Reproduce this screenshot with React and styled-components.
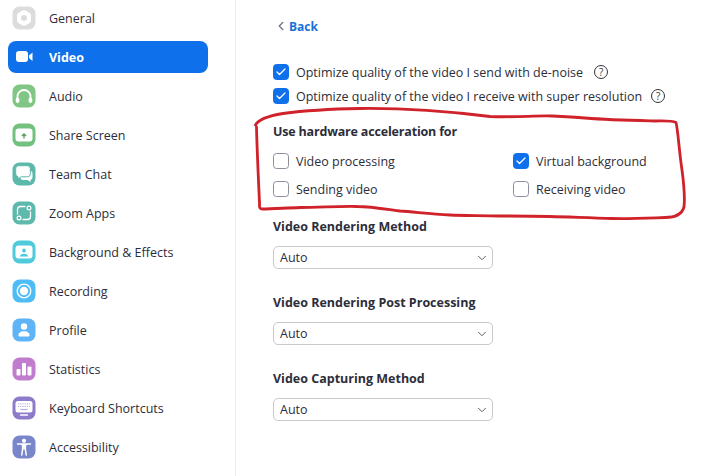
import React from "react";
import styled, { createGlobalStyle } from "styled-components";
import { ChevronLeft, ChevronDown, Check } from "lucide-react";

const Global = createGlobalStyle`
  html, body { margin: 0; padding: 0; background: #fff; }
  body { font-family: "Open Sans", "Noto Sans", sans-serif; color: #232333; overflow: hidden; }
`;

const Page = styled.div`
  position: relative;
  display: flex;
  width: 725px;
  height: 476px;
  overflow: hidden;
`;

const Sidebar = styled.nav`
  box-sizing: border-box;
  width: 236px;
  height: 476px;
  padding: 2px 27px 0 8px;
  border-right: 1px solid #ededf0;
  display: flex;
  flex-direction: column;
`;

const NavItem = styled.div`
  box-sizing: border-box;
  height: 32px;
  margin-bottom: 7px;
  padding-left: 4px;
  display: flex;
  align-items: center;
  border-radius: 8px;
  font-size: 12.5px;
  font-weight: ${(p) => (p.$active ? 700 : 400)};
  color: ${(p) => (p.$active ? "#fff" : "#2d2d3a")};
  background: ${(p) => (p.$active ? "#0e71eb" : "transparent")};
`;

const NavIcon = styled.span`
  width: 24px;
  height: 24px;
  flex: none;
  margin-right: 13px;
  display: flex;
  svg { display: block; }
`;

const Tile = ({ color, children }) => (
  <svg width="24" height="24" viewBox="0 0 24 24">
    <rect x="0.5" y="0.5" width="23" height="23" rx="7" fill={color} />
    {children}
  </svg>
);

const icons = {
  General: (
    <Tile color="#dcdcdc">
      <path
        d="M10.6 4.6a2.600 2.600 0 0 1 2.800 0l4.200 2.500a2.600 2.600 0 0 1 1.400 2.300v5.200a2.600 2.600 0 0 1-1.400 2.300l-4.200 2.500a2.600 2.600 0 0 1-2.800 0l-4.200-2.500A2.600 2.600 0 0 1 5 14.600V9.400a2.600 2.600 0 0 1 1.400-2.300z"
        fill="#fff"
      />
      <circle cx="12" cy="12" r="3" fill="#dcdcdc" />
    </Tile>
  ),
  Video: (
    <svg width="24" height="24" viewBox="0 0 24 24">
      <rect x="4" y="6" width="12" height="11" rx="3" fill="#fff" />
      <path d="M17 10.500 20.500 7.500V16L17 13z" fill="#fff" />
    </svg>
  ),
  Audio: (
    <Tile color="#80c684">
      <path d="M5.500 15v-2.500a6.500 6.500 0 0 1 13 0V15" fill="none" stroke="#fff" strokeWidth="1.800" />
      <rect x="3.800" y="13.500" width="3.500" height="5.500" rx="1.700" fill="#fff" />
      <rect x="16.700" y="13.500" width="3.500" height="5.500" rx="1.700" fill="#fff" />
    </Tile>
  ),
  "Share Screen": (
    <Tile color="#72c17e">
      <rect x="3.500" y="5.500" width="17" height="13" rx="3" fill="#fff" />
      <path d="M12 15.500v-4M9.900 13 12 10.900l2.100 2.100" fill="none" stroke="#4f9f5c" strokeWidth="1.300" />
    </Tile>
  ),
  "Team Chat": (
    <Tile color="#5bb8ab">
      <path d="M11 9h7a2.500 2.500 0 0 1 2.500 2.500v4a2.500 2.500 0 0 1-2 2.400V20l-3-2H11a2.500 2.500 0 0 1-2.500-2.500v-4A2.500 2.500 0 0 1 11 9z" fill="#fff" />
      <path d="M6.500 3.700h9A2.800 2.800 0 0 1 18.300 6.500v5.500a2.800 2.800 0 0 1-2.800 2.800H9.300L6 17v-2.300a2.800 2.800 0 0 1-2.300-2.700V6.500A2.800 2.800 0 0 1 6.500 3.700z" fill="#fff" stroke="#5bb8ab" strokeWidth="1" />
    </Tile>
  ),
  "Zoom Apps": (
    <Tile color="#5cb9ab">
      <path d="M13 5.500H8.500a3 3 0 0 0-3 3V13M11 18.500h4.500a3 3 0 0 0 3-3V11" fill="none" stroke="#fff" strokeWidth="1.300" strokeLinecap="round" />
      <circle cx="17" cy="7" r="1.900" fill="none" stroke="#fff" strokeWidth="1.200" />
      <circle cx="7" cy="17" r="1.900" fill="none" stroke="#fff" strokeWidth="1.200" />
    </Tile>
  ),
  "Background & Effects": (
    <Tile color="#4fcbdc">
      <rect x="3.500" y="5.500" width="17" height="13" rx="3" fill="#fff" />
      <circle cx="12" cy="10.500" r="2" fill="#4fcbdc" />
      <path d="M8 16.500c0-2 2-2.800 4-2.800s4 .8 4 2.800z" fill="#4fcbdc" />
    </Tile>
  ),
  Recording: (
    <Tile color="#4fbdf5">
      <circle cx="12" cy="12" r="6.800" fill="none" stroke="#fff" strokeWidth="1.300" />
      <circle cx="12" cy="12" r="4.200" fill="#fff" />
    </Tile>
  ),
  Profile: (
    <Tile color="#5eb4f7">
      <circle cx="12" cy="8.500" r="3.200" fill="#fff" />
      <path d="M6.500 17.300c0-3 2.500-4 5.500-4s5.500 1 5.500 4c0 .8-.5 1.200-1.200 1.200H7.700c-.7 0-1.200-.4-1.200-1.200z" fill="#fff" />
    </Tile>
  ),
  Statistics: (
    <Tile color="#c17ccf">
      <rect x="4.500" y="12" width="4" height="6.500" rx="1" fill="#fff" />
      <rect x="10" y="6" width="4" height="12.500" rx="1" fill="#fff" />
      <rect x="15.500" y="9.500" width="4" height="9" rx="1" fill="#fff" />
    </Tile>
  ),
  "Keyboard Shortcuts": (
    <Tile color="#8e7ccb">
      <rect x="3.500" y="5" width="17" height="11.500" rx="2.500" fill="#fff" />
      <path d="M6 8h12M6 10.500h12" stroke="#b5a9de" strokeWidth="1.200" strokeDasharray="1.200 1" fill="none" />
      <path d="M8.500 13.500h7" stroke="#b5a9de" strokeWidth="1.200" fill="none" />
      <path d="M8.500 19h7" stroke="#fff" strokeWidth="1.300" strokeLinecap="round" fill="none" />
    </Tile>
  ),
  Accessibility: (
    <Tile color="#7a86ca">
      <circle cx="12" cy="5.800" r="2.100" fill="#fff" />
      <path d="M5.500 9h13M9.800 9.500l5 .1M10.600 9.500v4.500l-.8 6M13.400 9.500v4.500l.8 6" stroke="#fff" strokeWidth="1.500" strokeLinecap="round" fill="none" />
      <path d="M10.500 9h3v5.500h-3z" fill="#fff" />
    </Tile>
  ),
};

const navLabels = Object.keys(icons);

const Content = styled.main`
  flex: 1;
  padding: 16px 0 0 37px;
  display: flex;
  flex-direction: column;
  align-items: flex-start;
`;

const Back = styled.div`
  display: flex;
  align-items: center;
  height: 20px;
  margin: 0 0 24px 1px;
  gap: 1px;
  font-size: 12px;
  font-weight: 700;
  color: #1a71d8;
  svg { color: #747487; }
`;

const CheckRow = styled.label`
  display: flex;
  align-items: center;
  height: 24px;
  font-size: 12.5px;
  color: #2d2d3a;
`;

const Box = styled.span`
  box-sizing: border-box;
  width: 16px;
  height: 16px;
  flex: none;
  margin-right: 7px;
  border-radius: 3.5px;
  display: flex;
  align-items: center;
  justify-content: center;
  background: ${(p) => (p.$on ? "#0e71eb" : "#fff")};
  border: 1px solid ${(p) => (p.$on ? "#0e71eb" : "#8e8e9a")};
  color: #fff;
`;

const Help = styled.span`
  box-sizing: border-box;
  width: 14px;
  height: 14px;
  margin-left: ${(p) => p.$gap}px;
  border: 1.2px solid #333;
  border-radius: 50%;
  font-size: 10px;
  line-height: 12px;
  text-align: center;
  color: #333;
`;

const Heading = styled.h3`
  margin: 0;
  font-size: 12.5px;
  font-weight: 700;
  line-height: 20px;
  color: #2d2d3a;
`;

const AccelHeading = styled(Heading)`
  letter-spacing: -0.18px;
`;

const Accel = styled.section`
  margin-top: 14px;
`;

const AccelGrid = styled.div`
  margin-top: 5px;
  display: grid;
  grid-template-columns: 240px auto;
  grid-auto-rows: 28px;
  align-items: center;
`;

const Field = styled.div`
  margin-top: ${(p) => p.$top}px;
`;

const Select = styled.div`
  box-sizing: border-box;
  width: 220px;
  height: 23px;
  margin-top: 9px;
  padding: 0 3px 0 6px;
  display: flex;
  align-items: center;
  justify-content: space-between;
  border: 1px solid #c8c8cf;
  border-radius: 5px;
  font-size: 12.5px;
  color: #2d2d3a;
  svg { color: #555; }
`;

const Scribble = styled.svg`
  position: absolute;
  left: 0;
  top: 0;
  pointer-events: none;
`;

const Option = ({ on, children }) => (
  <CheckRow>
    <Box $on={on}>{on && <Check size={12} strokeWidth={2.5} />}</Box>
    {children}
  </CheckRow>
);

const renderingFields = [
  { title: "Video Rendering Method", top: 14 },
  { title: "Video Rendering Post Processing", top: 24 },
  { title: "Video Capturing Method", top: 24 },
];

export default function App() {
  return (
    <Page>
      <Global />
      <Sidebar>
        {navLabels.map((label) => (
          <NavItem key={label} $active={label === "Video"}>
            <NavIcon>{icons[label]}</NavIcon>
            {label}
          </NavItem>
        ))}
      </Sidebar>
      <Content>
        <Back>
          <ChevronLeft size={14} strokeWidth={2.4} />
          Back
        </Back>
        <Option on>
          Optimize quality of the video I send with de-noise
          <Help $gap={11}>?</Help>
        </Option>
        <Option on>
          Optimize quality of the video I receive with super resolution
          <Help $gap={9}>?</Help>
        </Option>
        <Accel>
          <AccelHeading>Use hardware acceleration for</AccelHeading>
          <AccelGrid>
            <Option>Video processing</Option>
            <Option on>Virtual background</Option>
            <Option>Sending video</Option>
            <Option>Receiving video</Option>
          </AccelGrid>
        </Accel>
        {renderingFields.map((field) => (
          <Field key={field.title} $top={field.top}>
            <Heading>{field.title}</Heading>
            <Select>
              Auto
              <ChevronDown size={14} strokeWidth={1.6} />
            </Select>
          </Field>
        ))}
      </Content>
      <Scribble width="725" height="476" viewBox="0 0 725 476">
        <path
          d="M255.5 125C258 120 268 116 283 113.500C305 110.500 330 109 360 108.500C400 108 445 111 490 116.500C515 117.500 535 115.500 552 116C565 116.500 575 117 585 118C610 120 635 120.500 655 121C665 121 672 120.500 676 122.500C678 130 679 150 682 170C684 185 685 198 684 207C682 214 676 217.500 665 217.500C650 218 630 219 612 218.500C590 218 570 217 550 216.500C530 216 515 216 500 216C480 215.500 465 215.500 450 215C430 214 415 212 400 211C385 209 370 206.500 357 206.500C340 206 320 207.500 300 207.500C285 208 272 209 262 209C259 209 259.500 206 259.500 203C258.500 180 257 150 256.500 127"
          fill="none"
          stroke="#d0222a"
          strokeWidth="2.800"
          strokeLinecap="round"
          strokeLinejoin="round"
        />
      </Scribble>
    </Page>
  );
}
